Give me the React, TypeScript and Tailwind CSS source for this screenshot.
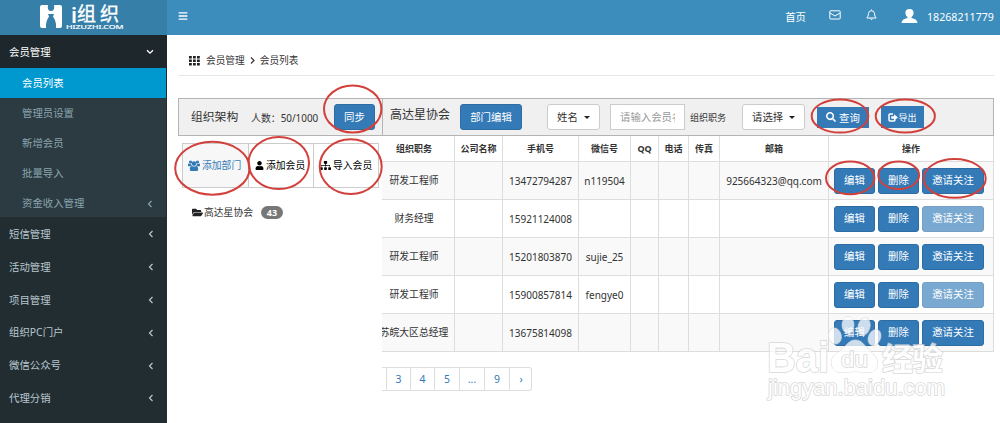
import React from "react";
import {
  FaBars,
  FaFolderOpen,
  FaSearch,
  FaSitemap,
  FaUser,
} from "react-icons/fa";

const subItems = ["管理员设置", "新增会员", "批量导入", "资金收入管理"];
const menuItems = ["短信管理", "活动管理", "项目管理", "组织PC门户", "微信公众号", "代理分销"];

const headings = ["组织职务", "公司名称", "手机号", "微信号", "QQ", "电话", "传真", "邮箱", "操作"];

interface Member {
  role: string;
  phone: string;
  wechat: string;
  mail: string;
  faded: boolean;
}

const members: Member[] = [
  { role: "研发工程师", phone: "13472794287", wechat: "n119504", mail: "925664323@qq.com", faded: false },
  { role: "财务经理", phone: "15921124008", wechat: "", mail: "", faded: true },
  { role: "研发工程师", phone: "15201803870", wechat: "sujie_25", mail: "", faded: false },
  { role: "研发工程师", phone: "15900857814", wechat: "fengye0", mail: "", faded: true },
  { role: "苏皖大区总经理", phone: "13675814098", wechat: "", mail: "", faded: false },
];

const columns = "grid grid-cols-[81px_48px_76px_52px_28px_30px_31px_109px_165px]";

function Logo() {
  return (
    <svg className="h-[35px] w-[100px]" viewBox="0 0 100 35" fill="#fff">
      <path
        d="M5 7Q5 5 7 5H13Q12 11 16 11Q20 11 19 5H25Q27 5 27 7V26Q27 28 25 28H21V24Q20 19 18 16.500L19 14H13L14 16.500Q12 19 11 24V28H7Q5 28 5 26Z"
        transform="translate(-2 0)"
      />
      <text x="33" y="22.500" fontSize="21" textLength="8" lengthAdjust="spacingAndGlyphs">i</text>
      <text x="40" y="20.800" fontSize="19" stroke="#fff" strokeWidth="0.350">组</text>
      <text x="63" y="20.800" fontSize="19" stroke="#fff" strokeWidth="0.350">织</text>
      <text x="29" y="28.800" fontSize="4.600" textLength="57.500" lengthAdjust="spacingAndGlyphs" stroke="#fff" strokeWidth="0.150">
        HIZUZHI.COM
      </text>
    </svg>
  );
}

function AngleLeft() {
  return (
    <svg className="h-[8px] w-[6px]" viewBox="0 0 6 8" fill="none" stroke="currentColor" strokeWidth="1.200">
      <path d="M4.500 1L1.500 4L4.500 7" />
    </svg>
  );
}

function UsersIcon() {
  return (
    <svg className="h-[11px] w-[12px]" viewBox="0 0 12 11" fill="currentColor">
      <circle cx="2.500" cy="2" r="1.600" />
      <circle cx="9.500" cy="2" r="1.600" />
      <circle cx="6" cy="3.600" r="2.300" />
      <path d="M0 6.200V4.800Q0 3.600 1 3.600L3.200 4.200Q3.300 5.400 4 6.200Z" />
      <path d="M12 6.200V4.800Q12 3.600 11 3.600L8.800 4.200Q8.700 5.400 8 6.200Z" />
      <path d="M1.800 9.500Q1.800 5.900 4 5.900Q6 7.300 8 5.900Q10.200 5.900 10.200 9.500Q10.200 11 8.800 11H3.200Q1.800 11 1.800 9.500Z" />
    </svg>
  );
}

function Sidebar() {
  return (
    <aside className="flex w-[167px] shrink-0 flex-col bg-[#222d32] text-[10.400px] text-[#b8c7ce]">
      <div className="flex h-[35px] shrink-0 bg-[#367fa9] pl-[37px]">
        <Logo />
      </div>
      <div className="flex h-[33px] shrink-0 items-center justify-between bg-[#1e282c] pr-[13px] pl-[9px] text-white">
        <span className="pt-px">会员管理</span>
        <svg className="h-[6px] w-[8px]" viewBox="0 0 8 6" fill="none" stroke="#fff" strokeWidth="1.300">
          <path d="M1 1.200L4 4.200L7 1.200" />
        </svg>
      </div>
      <div className="mr-px flex h-[30px] shrink-0 items-center bg-[#0099cf] pt-px pl-[22px] text-white">会员列表</div>
      <div className="mr-px flex h-[119px] shrink-0 flex-col bg-[#2c3b41] text-[#8aa4af]">
        {subItems.map((s, i) => (
          <div key={s} className="flex h-[30px] shrink-0 items-center justify-between pt-px pr-[13px] pl-[22px]">
            {s}
            {i === 3 && <AngleLeft />}
          </div>
        ))}
      </div>
      {menuItems.map((m) => (
        <div key={m} className="flex h-[32.900px] shrink-0 items-center justify-between pt-px pr-[13px] pl-[9px]">
          {m}
          <AngleLeft />
        </div>
      ))}
    </aside>
  );
}

function TopBar() {
  return (
    <header className="flex h-[35px] shrink-0 items-center bg-[#3c8dbc] pr-[6px] pl-[11px] text-[10.400px] text-white">
      <FaBars className="mb-[3px] size-[10px]" />
      <span className="ml-auto">首页</span>
      <svg className="mb-[5px] ml-[23px] h-[10px] w-[12px]" viewBox="0 0 12 10" fill="none" stroke="#fff" strokeWidth="1">
        <rect x="0.800" y="0.800" width="10.400" height="8.200" rx="0.600" />
        <path d="M1 3L6 6L11 3" />
      </svg>
      <svg className="mb-[5px] ml-[25px] h-[12px] w-[11px]" viewBox="0 0 11 12" fill="none" stroke="#fff" strokeWidth="1">
        <path d="M5.500 0.500V1.500M0.800 9H10.200Q8.500 7.500 8.500 4.500Q8.300 1.700 5.500 1.700Q2.700 1.700 2.500 4.500Q2.500 7.500 0.800 9ZM4.300 9.500Q5.500 12 6.700 9.500" />
      </svg>
      <svg className="mb-[3px] ml-[24px] h-[14px] w-[17px]" viewBox="0 0 17 14" fill="#fff">
        <path d="M8.500 0C5.800 0 4.300 1.600 4.400 4C4.500 6 5.500 7.200 6.500 7.900V9C4.500 9.800 1 10 0.500 14H16.500C16 10 12.500 9.800 10.500 9V7.900C11.500 7.200 12.500 6 12.600 4C12.700 1.600 11.200 0 8.500 0Z" />
      </svg>
      <span className="ml-[9px] w-[67px] text-[10.650px] whitespace-nowrap">18268211779</span>
    </header>
  );
}

function Breadcrumb() {
  return (
    <div className="flex h-[41px] items-center border-b border-[#e6e6e6] pt-[11px] pl-[11px] text-[9.700px] text-[#333]">
      <svg className="h-[10px] w-[11px]" viewBox="0 0 11 10" fill="#222">
        {[0, 4, 8].map((x) => [0, 3.5, 7].map((y) => <rect key={`${x}-${y}`} x={x} y={y} width="2.800" height="2.500" />))}
      </svg>
      <span className="ml-[6px]">会员管理</span>
      <svg className="mx-[5px] h-[7px] w-[5px]" viewBox="0 0 5 7" fill="none" stroke="#333" strokeWidth="1.200">
        <path d="M1 0.500L4 3.500L1 6.500" />
      </svg>
      <span>会员列表</span>
    </div>
  );
}

function Dropdown({ label, className }: { label: string; className: string }) {
  return (
    <div className={`flex h-[26px] shrink-0 items-center justify-between rounded-[3px] border border-[#ccc] bg-white pr-[9px] pl-[9px] text-[#333] ${className}`}>
      {label}
      <span className="border-x-[3px] border-t-[3px] border-x-transparent border-t-[#222]" />
    </div>
  );
}

function Toolbar() {
  return (
    <div className="flex h-[38px] border border-[#b4b4b4] bg-[#f0f0f0] text-[10.400px] text-[#333]">
      <div className="flex w-[204px] shrink-0 items-center border-r border-[#b4b4b4] pl-[12px]">
        <span className="w-[48px] text-[11.800px] whitespace-nowrap">组织架构</span>
        <span className="mt-[3px] ml-[12px] w-[68px] text-[9.900px] whitespace-nowrap">人数：50/1000</span>
        <span className="ml-[15px] flex h-[26px] w-[41px] items-center justify-center rounded-[3px] border border-[#2e6da4] bg-[#337ab7] text-white">
          同步
        </span>
      </div>
      <div className="flex min-w-0 grow items-center pl-[7px]">
        <span className="mb-[4px] w-[60px] text-[12px] whitespace-nowrap">高达星协会</span>
        <span className="ml-[10px] flex h-[26px] w-[62px] shrink-0 items-center justify-center rounded-[3px] border border-[#2e6da4] bg-[#337ab7] text-white">
          部门编辑
        </span>
        <Dropdown label="姓名" className="ml-[25px] w-[53px]" />
        <div className="ml-[10px] flex h-[26px] w-[75px] shrink-0 items-center border border-[#ccc] bg-white px-[9px] text-[#999]">
          <span className="overflow-hidden leading-[16px] whitespace-nowrap">请输入会员名</span>
        </div>
        <span className="ml-[5px] w-[37px] shrink-0 text-[9px] whitespace-nowrap">组织职务</span>
        <Dropdown label="请选择" className="ml-[15px] w-[63px]" />
        <span className="ml-[12px] flex h-[21px] w-[52px] shrink-0 items-center justify-center gap-[3px] bg-[#337ab7] text-white">
          <FaSearch className="size-[10px]" />
          <span className="pt-[2px]">查询</span>
        </span>
        <span className="ml-[12px] flex h-[22px] w-[43px] shrink-0 items-center justify-center bg-[#337ab7] text-[9px] text-white">
          <svg className="h-[9px] w-[10px]" viewBox="0 0 10 9">
            <path d="M5 1H2Q1 1 1 2V7Q1 8 2 8H6Q7 8 7 7V6.500" fill="none" stroke="#fff" strokeWidth="1.500" />
            <path d="M3.200 3.300H6V1.300L10 4.500L6 7.500V5.700H3.200Z" fill="#fff" />
          </svg>
          导出
        </span>
      </div>
    </div>
  );
}

function Organization() {
  const tab = "flex items-center whitespace-nowrap border-r border-[#ccc]";
  return (
    <div className="w-[204px] shrink-0 pt-[7px] pl-[4px] text-[9.800px]">
      <div className="grid h-[45px] w-[197px] grid-cols-[66px_65px_65px] border-y border-l border-[#ccc] text-black">
        <div className={`${tab} gap-[2px] bg-[#f7f7f7] pl-[5px] text-[#337ab7]`}>
          <UsersIcon />
          添加部门
        </div>
        <div className={`${tab} gap-[2px] pl-[6px]`}>
          <FaUser className="size-[9px]" />
          <span>添加会员</span>
        </div>
        <div className={`${tab} gap-[2px] pl-[6px]`}>
          <FaSitemap className="size-[11px]" />
          <span>导入会员</span>
        </div>
      </div>
      <div className="mt-[18px] flex items-center pl-[10px] text-[#333]">
        <FaFolderOpen className="size-[11px] text-[#222]" />
        <span className="ml-px">高达星协会</span>
        <span className="ml-[8px] flex h-[13px] w-[22px] items-center justify-center rounded-full bg-[#777] text-[9px] font-bold text-white">
          43
        </span>
      </div>
    </div>
  );
}

function MemberTable() {
  const cell = "flex items-center justify-center whitespace-nowrap border-r border-[#ddd]";
  const button = "flex h-[26px] shrink-0 items-center justify-center rounded-[3px] border border-[#2e6da4] bg-[#337ab7] text-[10.400px] text-white";
  return (
    <div className="w-[612px] overflow-hidden text-[10px] text-[#333]">
      <div className="-ml-[8px] w-[620px]">
        <div className={`${columns} h-[26px] border-b border-[#ddd] text-[9px] font-bold`}>
          {headings.map((h) => (
            <div key={h} className={cell}>{h}</div>
          ))}
        </div>
        {members.map((m, i) => (
          <div key={m.phone} className={`${columns} h-[38px] border-b border-[#ddd] ${i % 2 === 0 ? "bg-[#f9f9f9]" : "bg-white"}`}>
            <div className={`${cell} text-[9.800px]`}>{m.role}</div>
            <div className={cell} />
            <div className={cell}>{m.phone}</div>
            <div className={cell}>{m.wechat}</div>
            <div className={cell} />
            <div className={cell} />
            <div className={cell} />
            <div className={cell}>{m.mail}</div>
            <div className="flex items-center gap-[3px] border-r border-[#ddd] pl-[5px] whitespace-nowrap">
              <span className={`${button} w-[41px]`}>编辑</span>
              <span className={`${button} w-[41px]`}>删除</span>
              <span className={`${button} w-[62px] ${m.faded ? "opacity-65" : ""}`}>邀请关注</span>
            </div>
          </div>
        ))}
      </div>
      <div className="mt-[15px] grid h-[24px] w-[150px] grid-cols-[5px_24px_24px_25px_25px_25px_22px] rounded-r-[3px] border-y border-r border-[#ddd] text-[10.400px] text-[#337ab7]">
        {["", "3", "4", "5", "...", "9", "›"].map((p, i) => (
          <span key={i} className="flex items-center justify-center border-r border-[#ddd] last:border-r-0">{p}</span>
        ))}
      </div>
    </div>
  );
}

const rings = [
  [352.7, 109, 28.7, 23.5],
  [212.4, 168.2, 37.2, 26.5],
  [278.8, 163, 30.2, 26],
  [350.7, 166.6, 31, 27.3],
  [840, 116, 28.3, 16.6],
  [905.3, 116, 29.6, 16.6],
  [850.2, 177.9, 24.2, 16.4],
  [898.7, 175.3, 20.4, 13.7],
  [954.7, 178.4, 31, 19.3],
];

function Annotations() {
  return (
    <svg className="pointer-events-none absolute inset-0 h-[423px] w-[1000px]" viewBox="0 0 1000 423">
      <g fill="none" stroke="#d2403c" strokeWidth="2">
        {rings.map(([cx, cy, rx, ry]) => (
          <ellipse key={`${cx}`} cx={cx} cy={cy} rx={rx} ry={ry} />
        ))}
      </g>
      <g
        fill="#fff"
        stroke="#ccc"
        strokeWidth="1.600"
        strokeLinejoin="round"
        opacity="0.750"
        fontFamily="Liberation Sans, Noto Sans CJK SC, sans-serif"
        style={{ paintOrder: "stroke" }}
      >
        <text x="767" y="371.500" fontSize="42" fontWeight="bold" textLength="62" lengthAdjust="spacingAndGlyphs">Bai</text>
        <g strokeWidth="1">
          <ellipse cx="835" cy="336" rx="6.300" ry="8" transform="rotate(-15 835 336)" />
          <ellipse cx="848" cy="325" rx="6" ry="8.500" />
          <ellipse cx="864" cy="326.500" rx="6" ry="8.700" transform="rotate(15 864 326.500)" />
          <ellipse cx="874.500" cy="337.500" rx="6" ry="8.300" transform="rotate(25 874.500 337.500)" />
          <path d="M855 340C848 340 846 347 840 351C833 355 830 360 832 366C835 375 843 372 855 371.500C867 372 875 375 877 366C879 359 874 355 869 350C864 345 862 340 855 340Z" />
        </g>
        <text x="841" y="367" fontSize="22" textLength="27" lengthAdjust="spacingAndGlyphs">du</text>
        <text x="882" y="369.500" fontSize="31" fontWeight="bold" textLength="61">经验</text>
        <text x="768" y="395" fontSize="21.500" textLength="177" lengthAdjust="spacingAndGlyphs">jingyan.baidu.com</text>
      </g>
    </svg>
  );
}

export default function App() {
  return (
    <div className="relative flex h-[423px] w-[1000px] overflow-hidden bg-white font-['Noto_Sans','Noto_Sans_CJK_SC',sans-serif] leading-none">
      <Sidebar />
      <div className="flex min-w-0 grow flex-col">
        <TopBar />
        <main className="flex flex-col pr-[6px] pl-[11px]">
          <Breadcrumb />
          <div className="mt-[22px]">
            <Toolbar />
          </div>
          <div className="flex">
            <Organization />
            <MemberTable />
          </div>
        </main>
      </div>
      <Annotations />
    </div>
  );
}
